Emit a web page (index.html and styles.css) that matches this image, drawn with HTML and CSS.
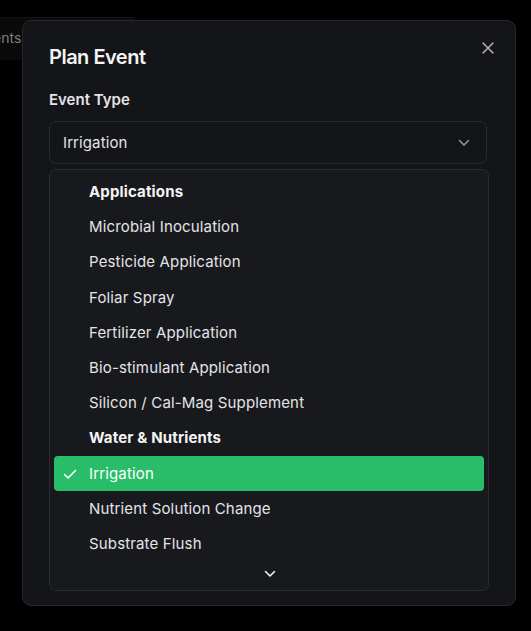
FILE: index.html
```html
<!DOCTYPE html>
<html lang="en">
<head>
  <meta charset="UTF-8">
  <title>Plan Event</title>
  <link rel="stylesheet" href="styles.css">
</head>
<body>
  <div class="page">
    <div class="bg-tab"><span>Events</span></div>
  </div>

  <div class="dialog">
    <h2 class="dialog-title">Plan Event</h2>
    <button class="close-btn" aria-label="Close">
      <svg width="12" height="12" viewBox="0 0 12 12" fill="none" stroke="currentColor" stroke-width="1.5" stroke-linecap="round">
        <path d="M1 1L11 11M11 1L1 11"/>
      </svg>
    </button>

    <label class="field-label">Event Type</label>
    <div class="select-trigger">
      <span>Irrigation</span>
      <svg width="12" height="8" viewBox="0 0 12 8" fill="none" stroke="currentColor" stroke-width="1.5" stroke-linecap="round" stroke-linejoin="round">
        <path d="M1.5 1.5L6 6L10.5 1.5"/>
      </svg>
    </div>
    <div class="field-ghost"></div>
    <div class="field-ghost"></div>

    <div class="select-menu">
      <div class="menu-list">
        <div class="menu-group">Applications</div>
        <div class="menu-item">Microbial Inoculation</div>
        <div class="menu-item">Pesticide Application</div>
        <div class="menu-item">Foliar Spray</div>
        <div class="menu-item">Fertilizer Application</div>
        <div class="menu-item">Bio-stimulant Application</div>
        <div class="menu-item">Silicon / Cal-Mag Supplement</div>
        <div class="menu-group">Water &amp; Nutrients</div>
        <div class="menu-item selected">
          <svg class="check" width="14" height="14" viewBox="0 0 14 14" fill="none" stroke="currentColor" stroke-width="1.6" stroke-linecap="round" stroke-linejoin="round">
            <path d="M1.5 7.5L5 11L12.5 3.5"/>
          </svg>
          Irrigation
        </div>
        <div class="menu-item">Nutrient Solution Change</div>
        <div class="menu-item">Substrate Flush</div>
      </div>
      <div class="scroll-down">
        <svg width="12" height="8" viewBox="0 0 12 8" fill="none" stroke="currentColor" stroke-width="1.6" stroke-linecap="round" stroke-linejoin="round">
          <path d="M1.5 1.5L6 6L10.5 1.5"/>
        </svg>
      </div>
    </div>
  </div>
</body>
</html>
```

FILE: styles.css
```css
* {
  box-sizing: border-box;
}

body {
  margin: 0;
  background-color: #000;
  font-family: Inter, "Noto Sans", sans-serif;
  color: #e4e4e7;
  height: 631px;
  overflow: hidden;
}

.page {
  padding-top: 17px;
}

.bg-tab {
  width: 135px;
  height: 43px;
  background-color: #0a0a0b;
  border-top: 1px solid #141416;
  overflow: hidden;
  color: #7d7d82;
  font-size: 14px;
  line-height: 40px;
}

.bg-tab span {
  margin-left: -23px;
}

.dialog {
  position: absolute;
  top: 20px;
  left: 22px;
  width: 494px;
  height: 586px;
  background-color: #141519;
  border: 1px solid #27282d;
  border-radius: 9px;
  padding: 22px 26px;
}

.dialog-title {
  margin: 0;
  font-size: 20px;
  line-height: 28px;
  font-weight: 600;
  color: #f4f4f5;
  letter-spacing: -0.5px;
}

.close-btn {
  position: absolute;
  top: 21px;
  right: 21px;
  background: none;
  border: 0;
  padding: 0;
  color: #b4b4b8;
  display: flex;
}

.field-label {
  display: block;
  margin-top: 19px;
  font-size: 15px;
  line-height: 20px;
  font-weight: 600;
  color: #e4e4e7;
}

.select-trigger {
  margin-top: 11px;
  height: 43px;
  width: 438px;
  border: 1px solid #2a2b31;
  border-radius: 7px;
  display: flex;
  align-items: center;
  justify-content: space-between;
  padding: 0 16px 0 13px;
  font-size: 15px;
  color: #e4e4e7;
  letter-spacing: 0.1px;
}

.select-trigger svg {
  color: #9a9aa0;
}

.field-ghost {
  margin-top: 6px;
  height: 43px;
  width: 438px;
  border: 1px solid #26272c;
  border-radius: 7px;
}

.select-menu {
  position: absolute;
  top: 148px;
  left: 26px;
  width: 440px;
  height: 422px;
  background-color: #18191d;
  border: 1px solid #2b2c32;
  border-radius: 7px;
  padding: 4px;
  display: flex;
  flex-direction: column;
}

.menu-group,
.menu-item {
  display: flex;
  align-items: center;
  height: 35.2px;
  padding-left: 35px;
  font-size: 15px;
  letter-spacing: 0.15px;
  color: #e4e4e7;
  border-radius: 4px;
  position: relative;
}

.menu-group {
  font-weight: 700;
  color: #f4f4f5;
}

.menu-item.selected {
  background-color: #2abd69;
  color: #fff;
}

.check {
  position: absolute;
  left: 9px;
  top: 11px;
}

.scroll-down {
  flex: 1;
  display: flex;
  align-items: center;
  justify-content: center;
  color: #f4f4f5;
  padding-left: 2px;
}
```
